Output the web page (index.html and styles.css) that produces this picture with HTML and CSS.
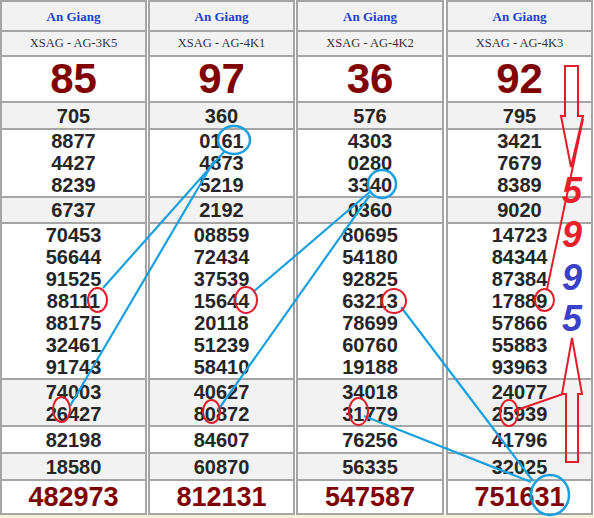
FILE: index.html
```html
<!DOCTYPE html>
<html>
<head>
<meta charset="utf-8">
<link rel="stylesheet" href="styles.css">
</head>
<body>
<div class="page">
  <div class="board">
    <div class="col">
      <div class="cell r1 prov">An Giang</div>
      <div class="cell r2 code">XSAG - AG-3K5</div>
      <div class="cell r3 big">85</div>
      <div class="cell r4 num gray">705</div>
      <div class="cell r5 num">8877<br>4427<br>8239</div>
      <div class="cell r6 num gray">6737</div>
      <div class="cell r7 num">70453<br>56644<br>91525<br>88111<br>88175<br>32461<br>91743</div>
      <div class="cell r8 num gray">74003<br>26427</div>
      <div class="cell r9 num">82198</div>
      <div class="cell r10 num gray">18580</div>
      <div class="cell r11 special">482973</div>
    </div>
    <div class="col">
      <div class="cell r1 prov">An Giang</div>
      <div class="cell r2 code">XSAG - AG-4K1</div>
      <div class="cell r3 big">97</div>
      <div class="cell r4 num gray">360</div>
      <div class="cell r5 num">0161<br>4873<br>5219</div>
      <div class="cell r6 num gray">2192</div>
      <div class="cell r7 num">08859<br>72434<br>37539<br>15644<br>20118<br>51239<br>58410</div>
      <div class="cell r8 num gray">40627<br>80872</div>
      <div class="cell r9 num">84607</div>
      <div class="cell r10 num gray">60870</div>
      <div class="cell r11 special">812131</div>
    </div>
    <div class="col wide">
      <div class="cell r1 prov">An Giang</div>
      <div class="cell r2 code">XSAG - AG-4K2</div>
      <div class="cell r3 big">36</div>
      <div class="cell r4 num gray">576</div>
      <div class="cell r5 num">4303<br>0280<br>3340</div>
      <div class="cell r6 num gray">0360</div>
      <div class="cell r7 num">80695<br>54180<br>92825<br>63213<br>78699<br>60760<br>19188</div>
      <div class="cell r8 num gray">34018<br>31779</div>
      <div class="cell r9 num">76256</div>
      <div class="cell r10 num gray">56335</div>
      <div class="cell r11 special">547587</div>
    </div>
    <div class="col last">
      <div class="cell r1 prov">An Giang</div>
      <div class="cell r2 code">XSAG - AG-4K3</div>
      <div class="cell r3 big">92</div>
      <div class="cell r4 num gray">795</div>
      <div class="cell r5 num">3421<br>7679<br>8389</div>
      <div class="cell r6 num gray">9020</div>
      <div class="cell r7 num">14723<br>84344<br>87384<br>17889<br>57866<br>55883<br>93963</div>
      <div class="cell r8 num gray">24077<br>25939</div>
      <div class="cell r9 num">41796</div>
      <div class="cell r10 num gray">32025</div>
      <div class="cell r11 special">751631</div>
    </div>
  </div>

  <svg class="marks" width="594" height="518" viewBox="0 0 594 518">
    <g class="blue-lines">
      <line x1="103" y1="288" x2="224" y2="152"/>
      <line x1="70" y1="406" x2="214" y2="161"/>
      <line x1="253" y1="292" x2="371" y2="191"/>
      <line x1="218" y1="410" x2="370" y2="195"/>
      <line x1="401" y1="307" x2="533" y2="481"/>
      <line x1="364" y1="416" x2="531" y2="482"/>
    </g>
    <g class="blue-rings">
      <ellipse cx="234" cy="140" rx="16" ry="14"/>
      <ellipse cx="382" cy="184" rx="14" ry="14"/>
      <ellipse cx="550" cy="495" rx="19" ry="20"/>
    </g>
    <g class="red-rings">
      <ellipse cx="97.5" cy="300" rx="9.5" ry="12"/>
      <ellipse cx="61.5" cy="409.5" rx="8.5" ry="12.5"/>
      <ellipse cx="246" cy="300" rx="11" ry="13"/>
      <ellipse cx="211.5" cy="411.5" rx="8.5" ry="11.5"/>
      <ellipse cx="394" cy="301" rx="12" ry="12"/>
      <ellipse cx="358.5" cy="411.5" rx="9.5" ry="13.5"/>
      <ellipse cx="509" cy="413" rx="9" ry="13"/>
      <ellipse cx="544.5" cy="300" rx="9.5" ry="11"/>
    </g>
    <g class="red-lines">
      <line x1="547" y1="289" x2="583" y2="119"/>
      <line x1="514" y1="411" x2="563" y2="394"/>
      <polygon points="565,66 578,66 578,116 583,116 571,167 561,116 565,116"/>
      <polygon points="572,338 582,394 578,394 578,462 566,462 566,394 562,394"/>
    </g>
    <text class="dig red" x="562" y="203">5</text>
    <text class="dig red" x="562" y="247">9</text>
    <text class="dig blue" x="562" y="290">9</text>
    <text class="dig blue" x="562" y="331">5</text>
  </svg>
</div>
</body>
</html>
```

FILE: styles.css
```css
* { box-sizing: border-box; }
html, body { margin: 0; padding: 0; }
body {
  background: #f6efdc;
  width: 594px;
  height: 518px;
  overflow: hidden;
}
.page {
  position: relative;
  width: 594px;
  height: 518px;
}
.board {
  display: flex;
  gap: 1px;
  background: #ffffff;
  height: 515px;
}
.col {
  width: 147px;
  display: flex;
  flex-direction: column;
  border-left: 2px solid #a5a5a5;
  border-right: 2px solid #a5a5a5;
  border-bottom: 2px solid #a5a5a5;
  background: #ffffff;
}
.col.wide { width: 148px; }
.col.last { margin-left: 1px; }
.cell {
  border-top: 2px solid #a5a5a5;
  text-align: center;
  display: flex;
  flex-direction: column;
  justify-content: center;
  background: #ffffff;
}
.gray { background: #f2f2f2; }
.r1 { height: 30px; background: #f2f2f2; }
.r2 { height: 25px; background: #f2f2f2; }
.r3 { height: 46px; }
.r4 { height: 27px; }
.r5 { height: 68px; }
.r6 { height: 26px; }
.r7 { height: 156px; }
.r8 { height: 47px; }
.r9 { height: 27px; }
.r10 { height: 27px; }
.r11 { flex: 1; }
.prov {
  font-family: "Liberation Serif", "Times New Roman", serif;
  font-weight: bold;
  font-size: 13px;
  color: #2040d0;
  padding-top: 2px;
}
.code {
  font-family: "Liberation Serif", "Times New Roman", serif;
  font-size: 12.5px;
  color: #333333;
}
.big {
  font-family: "Liberation Sans", Arial, sans-serif;
  font-weight: bold;
  font-size: 42px;
  line-height: 44px;
  color: #800000;
}
.num {
  font-family: "Liberation Sans", Arial, sans-serif;
  font-weight: bold;
  font-size: 20px;
  line-height: 22px;
  color: #262626;
}
.special {
  font-family: "Liberation Sans", Arial, sans-serif;
  font-weight: bold;
  font-size: 27px;
  line-height: 30px;
  color: #800000;
}
.marks {
  position: absolute;
  left: 0;
  top: 0;
  pointer-events: none;
}
.blue-lines line {
  stroke: #18a0e0;
  stroke-width: 2.2;
}
.blue-rings ellipse {
  fill: none;
  stroke: #18a0e0;
  stroke-width: 2.5;
}
.red-rings ellipse {
  fill: none;
  stroke: #e21d2b;
  stroke-width: 2;
}
.red-lines line,
.red-lines polygon {
  fill: none;
  stroke: #e21d2b;
  stroke-width: 2;
}
.dig {
  font-family: "Liberation Sans", Arial, sans-serif;
  font-weight: bold;
  font-style: italic;
  font-size: 36px;
}
.dig.red { fill: #e8202a; }
.dig.blue { fill: #3a40c8; }
```
